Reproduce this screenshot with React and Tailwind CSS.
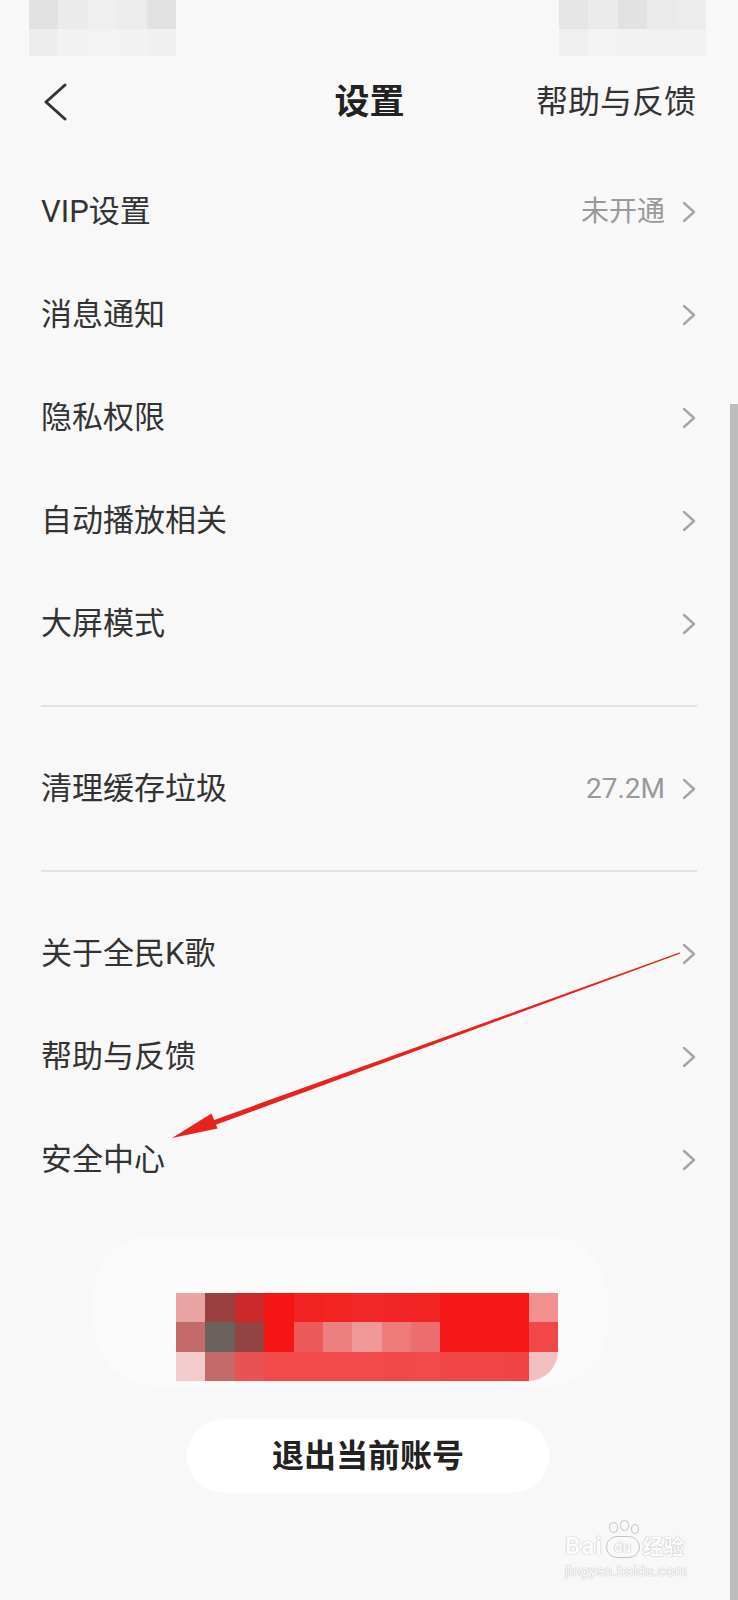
import React from 'react';

const font = { fontFamily: 'Roboto, "Noto Sans CJK SC", "Noto Sans", sans-serif' };

const statusLeft = [
  ['bg-[#e2e2e2]', 'bg-[#ebebeb]', 'bg-[#efefef]', 'bg-[#ececec]', 'bg-[#e2e2e2]'],
  ['bg-[#ededed]', 'bg-[#f2f2f2]', 'bg-[#f3f3f3]', 'bg-[#f2f2f2]', 'bg-[#f0f0f0]'],
];
const statusRight = [
  ['bg-[#e5e5e5]', 'bg-[#ebebeb]', 'bg-[#e2e2e2]', 'bg-[#eaeaea]', 'bg-[#ececec]'],
  ['bg-[#efefef]', 'bg-[#f3f3f3]', 'bg-[#f2f2f2]', 'bg-[#f1f1f1]', 'bg-[#f1f1f1]'],
];

const redCells = [
  'bg-[#e8a3a3]', 'bg-[#9a4040]', 'bg-[#cc2a2a]', 'bg-[#f51515]', 'bg-[#f22222]', 'bg-[#f22424]', 'bg-[#f22828]',
  'bg-[#f22626]', 'bg-[#f22424]', 'bg-[#f51818]', 'bg-[#f51818]', 'bg-[#f51818]', 'bg-[#f29090]',
  'bg-[#c46a6a]', 'bg-[#6b625e]', 'bg-[#934443]', 'bg-[#f51515]', 'bg-[#ec5a5a]', 'bg-[#ec8080]', 'bg-[#f09898]',
  'bg-[#ee7a7a]', 'bg-[#ec6e6e]', 'bg-[#f51818]', 'bg-[#f51818]', 'bg-[#f51818]', 'bg-[#f04848]',
  'bg-[#f2cccc]', 'bg-[#c46a6a]', 'bg-[#e85252]', 'bg-[#f24a4a]', 'bg-[#f24a4a]', 'bg-[#f34b4b]', 'bg-[#f24a4a]',
  'bg-[#f24848]', 'bg-[#f24a4a]', 'bg-[#f24646]', 'bg-[#f24646]', 'bg-[#f24444]', 'bg-[#f2c0c0]',
];

function Chevron() {
  return (
    <svg width="14" height="22" viewBox="0 0 14 22" fill="none">
      <path d="M2 2 L12 11 L2 20" stroke="#a6a6a6" strokeWidth="2.4" strokeLinecap="round" strokeLinejoin="round" />
    </svg>
  );
}

function Row({ label, value }) {
  return (
    <div className="h-[103px] flex items-center justify-between pl-[41px] pr-[42px]">
      <span className="text-[31px] leading-none text-[#333333]">{label}</span>
      <div className="flex items-center gap-[17px]">
        {value && <span className="text-[28px] leading-none text-[#999999]">{value}</span>}
        <Chevron />
      </div>
    </div>
  );
}

function Divider() {
  return <div className="mx-[41px] my-[30px] h-[2px] bg-[#e2e2e2]" />;
}

function PixelBlock({ rows, className }) {
  return (
    <div className={className}>
      {rows.map((r, i) => (
        <div key={i} className="flex">
          {r.map((c, j) => (
            <div key={j} className={`w-[29.4px] ${i === 0 ? 'h-[29px]' : 'h-[27px]'} ${c}`} />
          ))}
        </div>
      ))}
    </div>
  );
}

export default function App() {
  return (
    <div className="relative w-[738px] min-h-[1600px] bg-[#f8f8f8] overflow-hidden" style={font}>
      {/* status bar (blurred) */}
      <div className="h-[57px] flex justify-between pl-[29px] pr-[32px]">
        <PixelBlock rows={statusLeft} />
        <PixelBlock rows={statusRight} />
      </div>

      {/* header */}
      <div className="h-[90px] grid grid-cols-[1fr_auto_1fr] items-center pl-[43px] pr-[42px]">
        <div>
          <svg width="26" height="38" viewBox="0 0 26 38" fill="none">
            <path d="M22 2 L3 19 L22 36" stroke="#333333" strokeWidth="3" strokeLinecap="round" strokeLinejoin="round" />
          </svg>
        </div>
        <span className="text-[35px] leading-none font-bold text-[#222222]">设置</span>
        <span className="justify-self-end text-[32px] leading-none text-[#333333]">帮助与反馈</span>
      </div>

      <div className="pt-[13px]">
        <Row label="VIP设置" value="未开通" />
        <Row label="消息通知" />
        <Row label="隐私权限" />
        <Row label="自动播放相关" />
        <Row label="大屏模式" />
        <Divider />
        <Row label="清理缓存垃圾" value="27.2M" />
        <Divider />
        <Row label="关于全民K歌" />
        <Row label="帮助与反馈" />
        <Row label="安全中心" />
      </div>

      {/* blurred account name */}
      <div className="mt-[25px] ml-[94px] w-[513px] pt-[57px] pb-[5px] pl-[82px] bg-[#fafafa] rounded-[60px]">
        <div className="grid grid-cols-13 w-[382px] rounded-br-[30px] overflow-hidden">
          {redCells.map((c, i) => (
            <div key={i} className={`h-[29.4px] ${c}`} />
          ))}
        </div>
      </div>

      <div className="mt-[33px] ml-[187px] w-[362px] h-[74px] rounded-full bg-white flex items-center justify-center">
        <span className="text-[32px] leading-none font-bold text-[#222222]">退出当前账号</span>
      </div>

      {/* scrollbar */}
      <div className="absolute right-0 top-[404px] bottom-0 w-[8px] bg-[#bdbdbd]" />

      {/* annotation arrow */}
      <svg className="absolute left-0 top-0 pointer-events-none" width="738" height="1600" viewBox="0 0 738 1600">
        <polygon points="680.2,952.3 679.8,953.7 215.2,1125 213.4,1120.2" fill="#e8221c" />
        <polygon points="172,1138 217.5,1128.5 211.5,1113.5" fill="#e8221c" />
      </svg>

      {/* watermark */}
      <div className="absolute left-[565px] top-[1520px] flex flex-col items-start text-[#fcfcfc] [text-shadow:0_0_1px_#b8b8b8,0_0_1px_#b8b8b8]">
        <div className="flex items-end gap-[2px]">
          <span className="text-[24px] leading-none font-bold tracking-[1px]">Bai</span>
          <span className="relative w-[36px] h-[38px] flex items-end justify-center">
            <span className="absolute top-[2px] left-[4px] w-[9px] h-[11px] rounded-full border border-[#c4c4c4]" />
            <span className="absolute top-[0px] left-[15px] w-[9px] h-[11px] rounded-full border border-[#c4c4c4]" />
            <span className="absolute top-[4px] left-[26px] w-[8px] h-[10px] rounded-full border border-[#c4c4c4]" />
            <span className="w-[34px] h-[22px] rounded-[12px] border border-[#c4c4c4] text-[15px] leading-[20px] text-center font-bold">du</span>
          </span>
          <span className="text-[21px] leading-none font-bold">经验</span>
        </div>
        <span className="text-[14px] leading-none mt-[6px] tracking-[0.5px]">jingyan.baidu.com</span>
      </div>
    </div>
  );
}
